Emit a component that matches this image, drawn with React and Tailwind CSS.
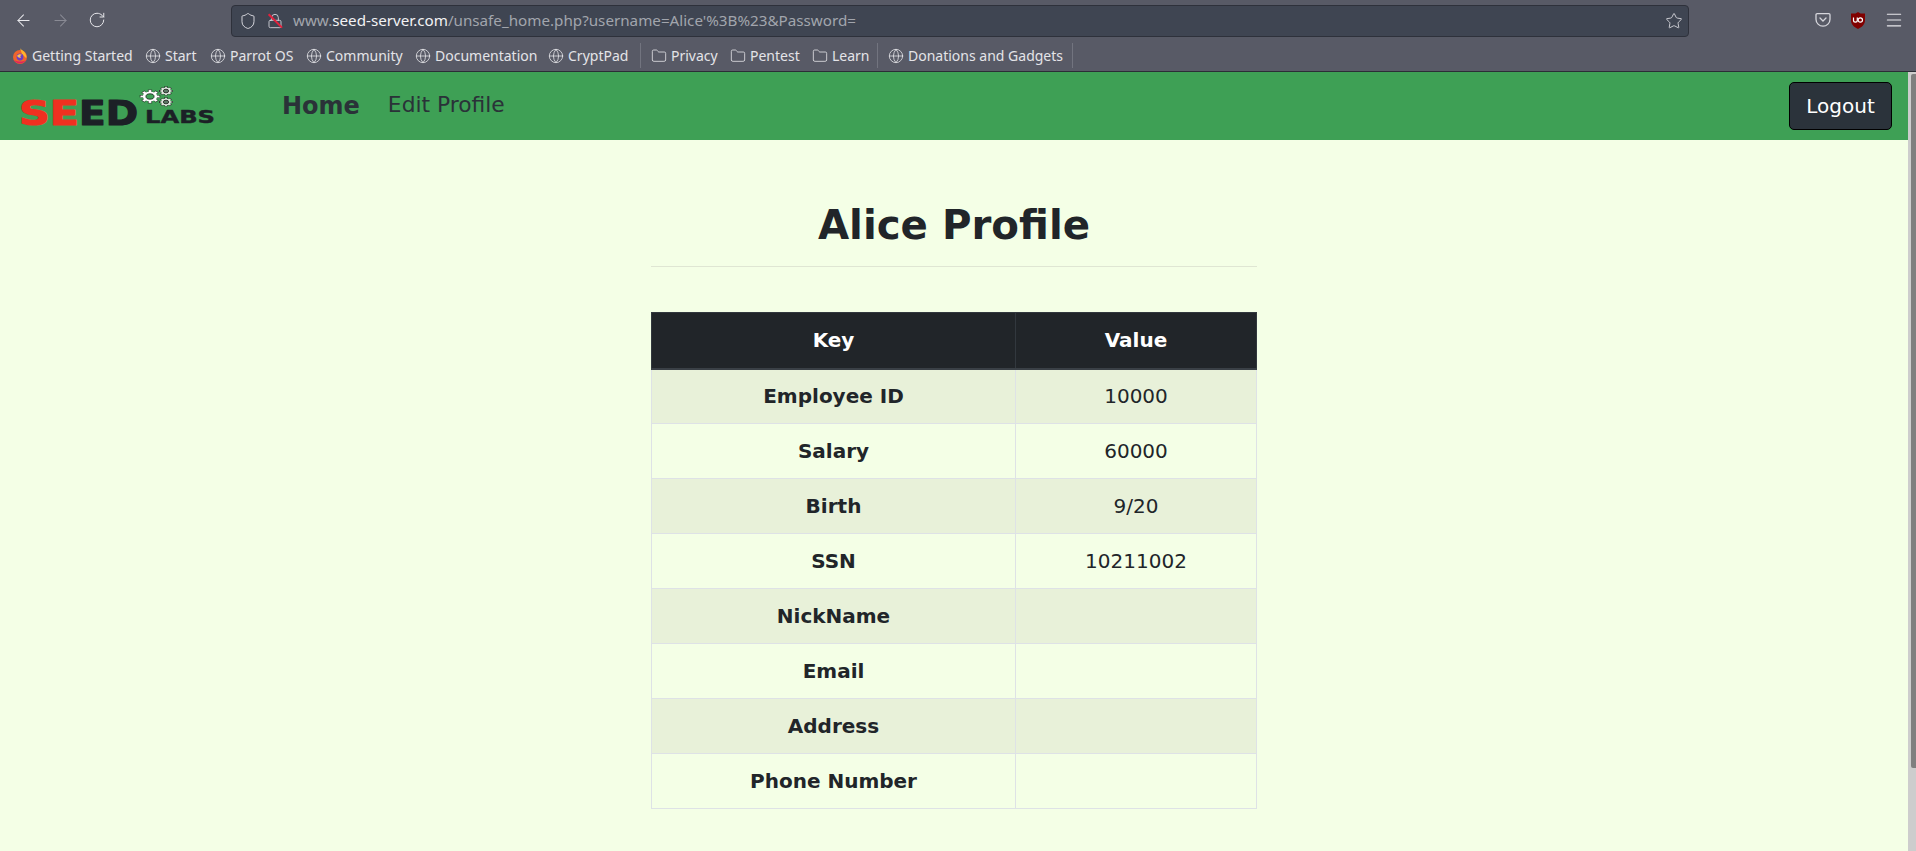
import React from 'react';
import { ArrowLeft, ArrowRight, RotateCw, Shield, Lock, Star, Menu, Globe, Folder } from 'lucide-react';

const sans = 'font-["DejaVu_Sans",sans-serif]';

const bookmarks = [
  { label: 'Getting Started', icon: 'firefox', w: 'w-[133px]' },
  { label: 'Start', icon: 'globe', w: 'w-[65px]' },
  { label: 'Parrot OS', icon: 'globe', w: 'w-[96px]' },
  { label: 'Community', icon: 'globe', w: 'w-[109px]' },
  { label: 'Documentation', icon: 'globe', w: 'w-[133px]' },
  { label: 'CryptPad', icon: 'globe', w: 'w-[92px]' },
  { sep: true },
  { label: 'Privacy', icon: 'folder', w: 'w-[79px]' },
  { label: 'Pentest', icon: 'folder', w: 'w-[82px]' },
  { label: 'Learn', icon: 'folder', w: 'w-[65px]' },
  { sep: true },
  { label: 'Donations and Gadgets', icon: 'globe', w: 'w-[184px]' },
  { sep: true },
];

const rows = [
  ['Employee ID', '10000'],
  ['Salary', '60000'],
  ['Birth', '9/20'],
  ['SSN', '10211002'],
  ['NickName', ''],
  ['Email', ''],
  ['Address', ''],
  ['Phone Number', ''],
];

const FirefoxIcon = () => (
  <svg width="16" height="16" viewBox="0 0 16 16" className="shrink-0">
    <circle cx="8" cy="9" r="7" fill="#f0642c" />
    <path d="M2 12a7 7 0 0 0 12 0c-3 2-8 2-12 0z" fill="#e0245e" />
    <path d="M8 0c1 2 5 3 6 7 1 2 0 3 0 3L10 6z" fill="#ffb52c" />
    <circle cx="8" cy="9" r="3.4" fill="#6b3fc4" />
    <path d="M5 8c1-2 4-2 5-1-2 0-2 2-1 3-2 0-3-1-4-2z" fill="#ffbd4f" />
  </svg>
);

const PocketIcon = () => (
  <svg width="16" height="16" viewBox="0 0 16 16" fill="none" stroke="#d6d6dc" strokeWidth="1.3">
    <path d="M2.2 1.6h11.6c.7 0 1.2.5 1.2 1.2v4.4a7 7 0 0 1-14 0V2.8c0-.7.5-1.2 1.2-1.2z" />
    <path d="M5 6l3 3 3-3" strokeLinecap="round" />
  </svg>
);

const UblockIcon = () => (
  <svg width="16" height="17" viewBox="0 0 16 17" className="ml-[1px]">
    <path d="M8 0l2.5 1.5H15v7c0 4-3.5 7-7 8.500-3.500-1.500-7-4.500-7-8.500v-7h4.500z" fill="#800000" />
    <path d="M3.500 5.500v2.700a1.900 1.900 0 0 0 3.800 0V5.500" fill="none" stroke="#fff" strokeWidth="1.200" />
    <circle cx="10.300" cy="8" r="2.200" fill="none" stroke="#fff" strokeWidth="1.200" />
  </svg>
);

// squashed gears from the logo, wider than tall
const Gear = ({ x, y, r, dotted }) => {
  const teeth = [0, 45, 90, 135];
  const c = dotted ? '#dfe8df' : '#fff';
  return (
    <g transform={`translate(${x} ${y}) scale(1.5 1)`}>
      {teeth.map((a) => (
        <rect key={a} x={-r * 0.2} y={-r * 1.1} width={r * 0.4} height={r * 2.2} fill={c} stroke="#111" strokeWidth="0.4" transform={`rotate(${a})`} />
      ))}
      <circle r={r * 0.8} fill={c} />
      <circle r={r * 0.45} fill={dotted ? '#5c7a66' : '#3ea055'} stroke="#111" strokeWidth="0.6" />
    </g>
  );
};

const SeedLogo = () => (
  <svg width="200" height="56" viewBox="0 0 200 56" className="shrink-0">
    <g fontFamily="'DejaVu Sans', sans-serif" fontWeight="700" strokeLinejoin="round">
      <text x="-1" y="47" fontSize="34" fill="#f03020" stroke="#f03020" strokeWidth="1.2" textLength="60" lengthAdjust="spacingAndGlyphs">SE</text>
      <text x="59" y="47" fontSize="34" fill="#1c2026" stroke="#1c2026" strokeWidth="1.2" textLength="59" lengthAdjust="spacingAndGlyphs">ED</text>
      <text x="125" y="45" fontSize="17" fill="#1c2026" stroke="#1c2026" strokeWidth="0.4" textLength="70" lengthAdjust="spacingAndGlyphs">LABS</text>
    </g>
    <Gear x={130} y={18.5} r={6} />
    <Gear x={146} y={13} r={4} dotted />
    <Gear x={146} y={24} r={4} dotted />
  </svg>
);

const BookmarkIcon = ({ type }) => {
  if (type === 'firefox') return <FirefoxIcon />;
  if (type === 'folder') return <Folder size={16} strokeWidth={1.2} className="shrink-0 text-[#e6e6ea]" />;
  return <Globe size={16} strokeWidth={1.2} className="shrink-0 text-[#e6e6ea]" />;
};

const BrowserChrome = () => (
  <div className={`h-[72px] shrink-0 bg-[#585a66] border-b border-[#2b2d36] font-["Noto_Sans",sans-serif]`}>
    <div className="h-[40px] flex items-center">
      <div className="w-[231px] shrink-0 flex items-center pl-[14px] gap-[18px]">
        <ArrowLeft size={19} strokeWidth={1.3} className="text-[#e8e8ec]" />
        <ArrowRight size={19} strokeWidth={1.3} className="text-[#8a8b95]" />
        <RotateCw size={18} strokeWidth={1.3} className="text-[#e8e8ec]" />
      </div>
      <div className="w-[1458px] h-[32px] mt-[1px] flex items-center bg-[#3f4552] border border-[#2e313b] rounded-[4px] pl-[7px] pr-[5px]">
        <Shield size={18} strokeWidth={1.3} className="text-[#d8d8de] shrink-0" />
        <span className="relative ml-[10px] shrink-0">
          <Lock size={16} strokeWidth={1.3} className="text-[#d8d8de]" />
          <span className="absolute left-[-1px] top-[7px] w-[19px] h-[1.5px] bg-[#e5203c] rotate-45" />
        </span>
        <span className="ml-[10px] text-[15.2px] text-[#a2a5ad] whitespace-nowrap">
          www.<span className="text-[#f2f2f4]">seed-server.com</span>/unsafe_home.php?username=Alice'%3B%23&amp;Password=
        </span>
        <Star size={18} strokeWidth={1.2} className="ml-auto text-[#d8d8de]" />
      </div>
      <div className="flex-1 flex items-center justify-end gap-[18px] pr-[12px]">
        <PocketIcon />
        <UblockIcon />
        <Menu size={20} strokeWidth={1.3} className="text-[#e8e8ec]" />
      </div>
    </div>
    <div className="h-[31px] flex items-center pl-[12px]">
      {bookmarks.map((b, i) =>
        b.sep ? (
          <span key={i} className="w-px h-[25px] bg-[#72747f] mr-[10px] shrink-0" />
        ) : (
          <div key={i} className={`${b.w} shrink-0 flex items-center gap-[4px] text-[14px] text-[#e4e4e8] whitespace-nowrap`}>
            <BookmarkIcon type={b.icon} />
            <span>{b.label}</span>
          </div>
        )
      )}
    </div>
  </div>
);

export default function App() {
  return (
    <div className="h-[851px] flex flex-col overflow-hidden bg-[#f4ffe6]">
      <BrowserChrome />
      <div className={`flex-1 flex min-h-0 ${sans} text-[#212529]`}>
        <div className="flex-1 min-w-0">
          <nav className="h-[68px] bg-[#3ea055] flex items-center pl-[20px] pr-[16px]">
            <SeedLogo />
            <a className="ml-[62px] text-[24px] font-bold text-[#2a3238]">Home</a>
            <a className="ml-[28px] mb-[2px] text-[21.8px] text-[#2a3238]">Edit Profile</a>
            <button className="ml-auto w-[103px] h-[48px] bg-[#2b333b] border border-black rounded-[5px] text-[20px] text-white">Logout</button>
          </nav>
          <main className="flex flex-col items-center">
            <div className="w-[606px]">
              <h1 className="mt-[62px] text-[40.3px] leading-[48px] font-bold text-center">Alice Profile</h1>
              <hr className="mt-[16px] border-t border-[#dfe6d3]" />
              <table className="mt-[45px] w-full table-fixed border-collapse text-[20px]">
                <colgroup>
                  <col className="w-[364px]" />
                  <col />
                </colgroup>
                <thead>
                  <tr className="h-[56px] bg-[#212529] text-white">
                    <th className="border border-[#32383e] border-b-2 border-b-[#3a4046] font-bold">Key</th>
                    <th className="border border-[#32383e] border-b-2 border-b-[#3a4046] font-bold">Value</th>
                  </tr>
                </thead>
                <tbody>
                  {rows.map(([key, value], i) => (
                    <tr key={key} className={i % 2 === 0 ? 'h-[55px] bg-[#e8f1d9]' : 'h-[55px] bg-[#f4ffe6]'}>
                      <th className="border border-[#dee2e6] font-bold">{key}</th>
                      <td className="border border-[#dee2e6] text-center">{value}</td>
                    </tr>
                  ))}
                </tbody>
              </table>
            </div>
          </main>
        </div>
        <div className="w-[8px] shrink-0 bg-[#cdcdcd] pl-[3px] pt-[2px]">
          <div className="h-[694px] bg-[#7f7f7f] rounded-l-[2px]" />
        </div>
      </div>
    </div>
  );
}
